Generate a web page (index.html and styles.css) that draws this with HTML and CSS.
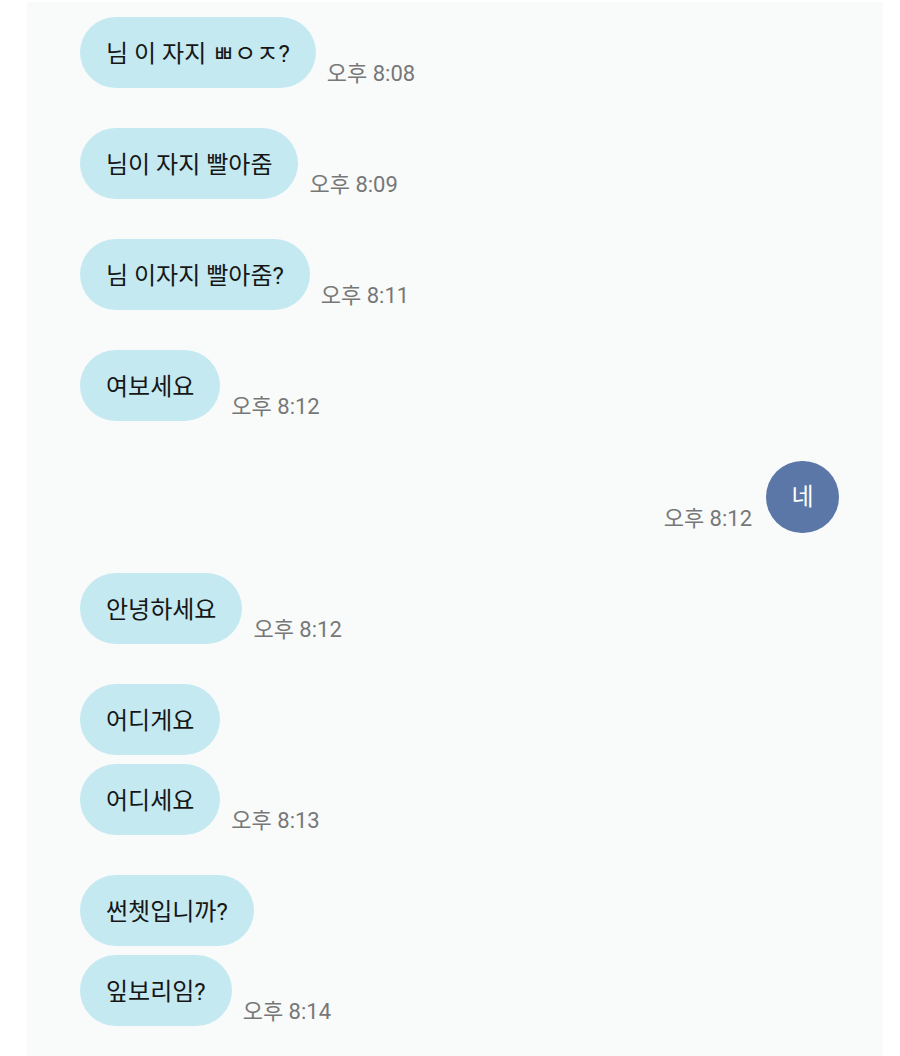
FILE: index.html
```html
<!DOCTYPE html>
<html lang="ko">
<head>
<meta charset="utf-8">
<title>채팅</title>
<link rel="stylesheet" href="styles.css">
</head>
<body>
<div class="panel">
  <div class="group">
    <div class="row in"><div class="bubble">님 이 자지 ㅃㅇㅈ?</div><span class="time">오후 8:08</span></div>
  </div>
  <div class="group">
    <div class="row in"><div class="bubble">님이 자지 빨아줌</div><span class="time">오후 8:09</span></div>
  </div>
  <div class="group">
    <div class="row in"><div class="bubble">님 이자지 빨아줌?</div><span class="time">오후 8:11</span></div>
  </div>
  <div class="group">
    <div class="row in"><div class="bubble">여보세요</div><span class="time">오후 8:12</span></div>
  </div>
  <div class="group">
    <div class="row out"><span class="time">오후 8:12</span><div class="bubble sent">네</div></div>
  </div>
  <div class="group">
    <div class="row in"><div class="bubble">안녕하세요</div><span class="time">오후 8:12</span></div>
  </div>
  <div class="group">
    <div class="row in"><div class="bubble">어디게요</div></div>
    <div class="row in"><div class="bubble">어디세요</div><span class="time">오후 8:13</span></div>
  </div>
  <div class="group">
    <div class="row in"><div class="bubble">썬쳇입니까?</div></div>
    <div class="row in"><div class="bubble">잎보리임?</div><span class="time">오후 8:14</span></div>
  </div>
</div>
</body>
</html>
```

FILE: styles.css
```css
html, body {
  margin: 0;
  padding: 0;
  background: #ffffff;
}
body {
  font-family: Roboto, "Noto Sans CJK KR", sans-serif;
}
.panel {
  margin: 2px 0 0 27px;
  width: 856px;
  min-height: 1054px;
  box-sizing: border-box;
  background: #f9fbfb;
  padding: 15px 44px 0 53px;
  display: flex;
  flex-direction: column;
  gap: 40px;
}
.group {
  display: flex;
  flex-direction: column;
  gap: 9px;
}
.row {
  display: flex;
  align-items: flex-end;
}
.row.in {
  justify-content: flex-start;
  gap: 11px;
}
.row.out {
  justify-content: flex-end;
  gap: 14px;
}
.bubble {
  height: 71px;
  box-sizing: border-box;
  padding: 3px 26px 0;
  border-radius: 36px;
  background: #c4e9f1;
  color: #161616;
  font-size: 24px;
  line-height: 1;
  display: flex;
  align-items: center;
  white-space: nowrap;
}
.bubble.sent {
  width: 73px;
  height: 72px;
  padding: 0;
  justify-content: center;
  background: #5b77a7;
  color: #ffffff;
}
.time {
  font-size: 22px;
  line-height: 24px;
  margin-bottom: 2px;
  color: #777777;
  white-space: nowrap;
}
```
